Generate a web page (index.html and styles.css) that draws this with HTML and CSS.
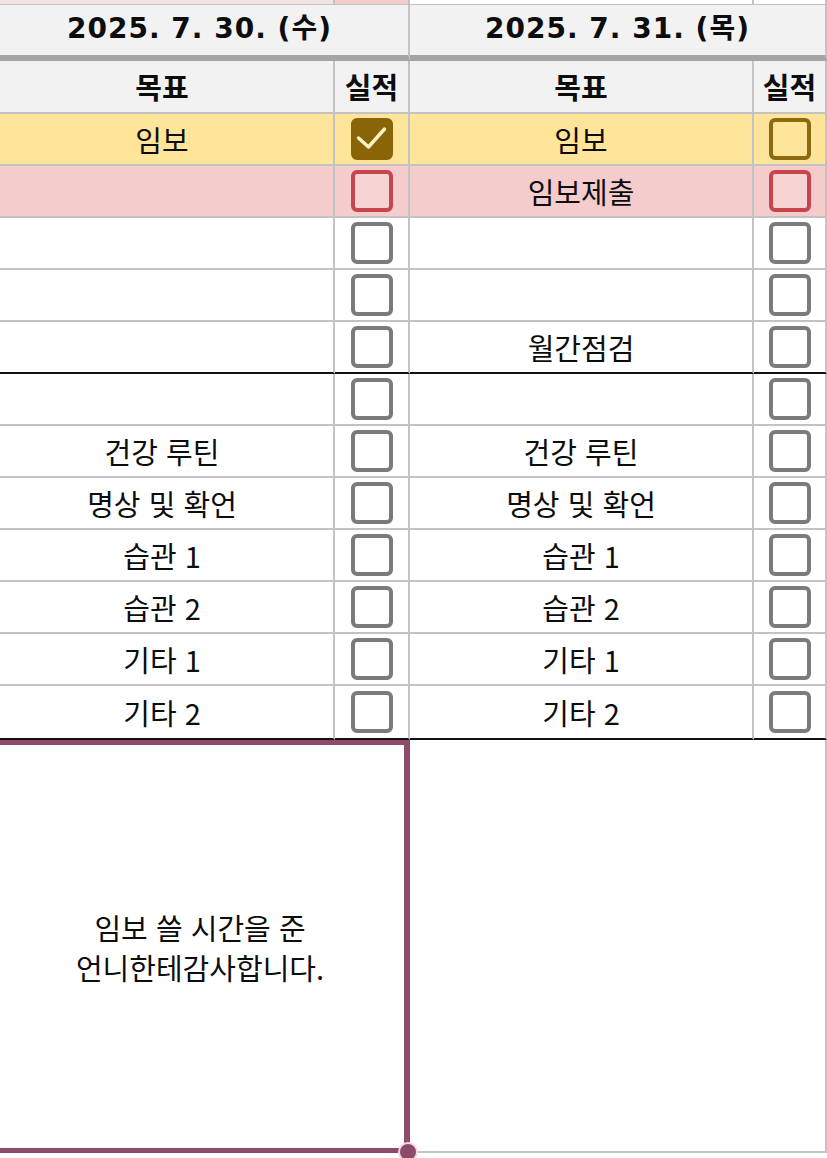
FILE: index.html
```html
<!DOCTYPE html>
<html lang="ko">
<head>
<meta charset="utf-8">
<title>일일 목표</title>
<link rel="stylesheet" href="styles.css">
</head>
<body>
<div class="sheet">
  <section class="day day-left">
    <div class="cell prev prev-goal"></div>
    <div class="cell prev prev-check"></div>
    <div class="cell date">2025. 7. 30. (수)</div>
    <div class="cell head">목표</div>
    <div class="cell head">실적</div>

    <div class="cell yellow">임보</div>
    <div class="cell yellow"><span class="box box-gold is-checked"><svg viewBox="0 0 34 34"><path d="M3.5 16 L13.5 25 L29.5 7"/></svg></span></div>
    <div class="cell pink"></div>
    <div class="cell pink"><span class="box box-red"></span></div>
    <div class="cell"></div>
    <div class="cell"><span class="box"></span></div>
    <div class="cell"></div>
    <div class="cell"><span class="box"></span></div>
    <div class="cell sep"></div>
    <div class="cell sep"><span class="box"></span></div>

    <div class="cell"></div>
    <div class="cell"><span class="box"></span></div>
    <div class="cell">건강 루틴</div>
    <div class="cell"><span class="box"></span></div>
    <div class="cell">명상 및 확언</div>
    <div class="cell"><span class="box"></span></div>
    <div class="cell">습관 1</div>
    <div class="cell"><span class="box"></span></div>
    <div class="cell">습관 2</div>
    <div class="cell"><span class="box"></span></div>
    <div class="cell">기타 1</div>
    <div class="cell"><span class="box"></span></div>
    <div class="cell sep last">기타 2</div>
    <div class="cell sep last"><span class="box"></span></div>

    <div class="cell memo selected">
      <p class="memo-text">임보 쓸 시간을 준<br>언니한테감사합니다.</p>
      <span class="handle handle-start"></span>
      <span class="handle handle-end"></span>
    </div>
  </section>

  <section class="day day-right">
    <div class="cell prev"></div>
    <div class="cell prev"></div>
    <div class="cell date">2025. 7. 31. (목)</div>
    <div class="cell head">목표</div>
    <div class="cell head">실적</div>

    <div class="cell yellow">임보</div>
    <div class="cell yellow"><span class="box box-gold"></span></div>
    <div class="cell pink">임보제출</div>
    <div class="cell pink"><span class="box box-red"></span></div>
    <div class="cell"></div>
    <div class="cell"><span class="box"></span></div>
    <div class="cell"></div>
    <div class="cell"><span class="box"></span></div>
    <div class="cell sep">월간점검</div>
    <div class="cell sep"><span class="box"></span></div>

    <div class="cell"></div>
    <div class="cell"><span class="box"></span></div>
    <div class="cell">건강 루틴</div>
    <div class="cell"><span class="box"></span></div>
    <div class="cell">명상 및 확언</div>
    <div class="cell"><span class="box"></span></div>
    <div class="cell">습관 1</div>
    <div class="cell"><span class="box"></span></div>
    <div class="cell">습관 2</div>
    <div class="cell"><span class="box"></span></div>
    <div class="cell">기타 1</div>
    <div class="cell"><span class="box"></span></div>
    <div class="cell sep last">기타 2</div>
    <div class="cell sep last"><span class="box"></span></div>

    <div class="cell memo memo-right"></div>
  </section>
</div>
</body>
</html>
```

FILE: styles.css
```css
html, body {
  margin: 0;
  padding: 0;
  background: #ffffff;
}

body {
  font-family: "Noto Sans CJK KR", "Noto Sans", sans-serif;
  color: #0d0d0d;
  overflow: hidden;
}

.sheet {
  display: flex;
  width: 827px;
  height: 1158px;
  overflow: hidden;
}

.day {
  display: grid;
  align-content: start;
  flex: none;
}

.day-left {
  margin-left: -9px;
  grid-template-columns: 344px 75px;
}

.day-right {
  grid-template-columns: 344px 73px;
}

.cell {
  box-sizing: border-box;
  height: 52px;
  border-right: 2px solid #c3c3c3;
  border-bottom: 2px solid #c3c3c3;
  display: flex;
  align-items: center;
  justify-content: center;
  font-size: 29px;
  line-height: 1;
  white-space: nowrap;
}

.prev {
  height: 5px;
  border-bottom-width: 1px;
  background: #ffffff;
}

.prev-goal {
  background: #f1e3e4;
}

.prev-check {
  background: #f4cccc;
}

.date {
  grid-column: span 2;
  height: 56px;
  background: #f2f2f2;
  border-bottom: 6px solid #a4a4a4;
  font-family: "DejaVu Sans", "Noto Sans CJK KR", sans-serif;
  font-weight: bold;
  font-size: 28px;
  letter-spacing: 1px;
  padding-bottom: 2px;
}

.head {
  height: 53px;
  background: #f2f2f2;
  font-weight: bold;
}

.yellow {
  background: #ffe599;
}

.pink {
  background: #f4cccc;
}

.sep {
  border-bottom: 2px solid #111111;
}

.last {
  height: 54px;
}

/* checkboxes */
.box {
  box-sizing: border-box;
  width: 42px;
  height: 42px;
  border: 4px solid #7b7b7b;
  border-radius: 6px;
  background: #ffffff;
  display: block;
}

.box-gold {
  border-color: #8c6a12;
  background: #ffe599;
}

.box-red {
  border-color: #c9454d;
  background: #f7d4d4;
}

.box.is-checked {
  background: #8a6508;
  border-color: #8a6508;
}

.box svg {
  display: block;
  width: 34px;
  height: 34px;
  overflow: visible;
}

.box svg path {
  fill: none;
  stroke: #fdf1c6;
  stroke-width: 3.4;
  stroke-linecap: round;
  stroke-linejoin: round;
}

/* memo block */
.memo {
  grid-column: span 2;
  height: 413px;
  position: relative;
  background: #ffffff;
}

.memo-text {
  margin: 0;
  font-size: 29px;
  line-height: 40px;
  text-align: center;
}

.selected {
  z-index: 2;
  border: 5px solid #8b4b69;
  border-right-width: 6px;
}

.handle {
  position: absolute;
  box-sizing: border-box;
  width: 20px;
  height: 20px;
  border-radius: 50%;
  background: #8b4b69;
  border: 2px solid #f7d6e2;
}

.handle-start {
  left: -17px;
  top: -14px;
}

.handle-end {
  right: -14px;
  bottom: -14px;
}
```
